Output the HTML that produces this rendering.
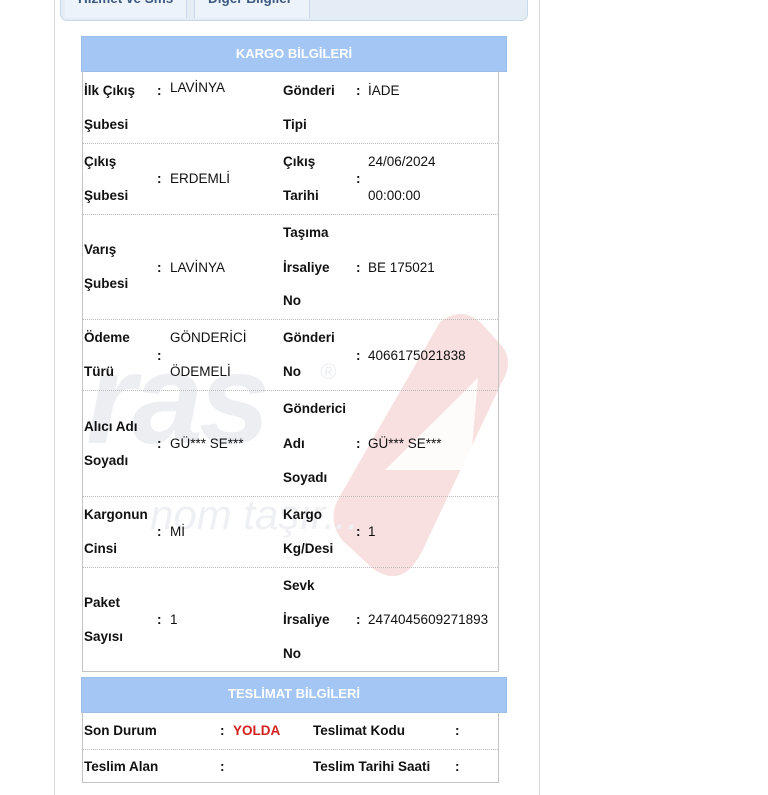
<!DOCTYPE html>
<html><head><meta charset="utf-8"><style>
body{margin:0;width:768px;height:768px;overflow:hidden;background:#fff;font-family:"Liberation Sans",Arial,sans-serif;position:relative}
.a{position:absolute;white-space:nowrap;line-height:20px;font-size:13.5px;color:#111}
.b{font-weight:bold;font-size:13.5px}
.hl{position:absolute;left:82px;width:416px;height:0;border-top:1px dotted #bbb}
</style></head><body>
<div style="position:absolute;left:54px;top:-5px;width:484px;height:800px;border-left:1px solid #d8d8d8;border-right:1px solid #d8d8d8"></div>
<div style="position:absolute;left:60px;top:-10px;width:466px;height:29px;background:#e4edf6;border:1px solid #c9d8e8;border-radius:0 0 7px 7px"></div>
<div style="position:absolute;left:65px;top:-10px;width:121px;height:28px;background:#edf3fa;border-right:1px solid #c9d8e8"></div>
<div style="position:absolute;left:194px;top:-10px;width:114px;height:28px;background:#edf3fa;border-left:1px solid #c9d8e8;border-right:1px solid #c9d8e8"></div>
<div class="a b" style="left:78px;top:-11px;color:#3d5a80">Hizmet ve Sms</div>
<div class="a b" style="left:208px;top:-11px;color:#3d5a80">Diğer Bilgiler</div>

<svg style="position:absolute;left:0;top:0" width="768" height="768">
<path d="M440 322 Q462 305 482 324 L502 346 Q514 362 502 382 L425 545 Q405 592 372 568 L342 540 Q326 518 340 496 Z" fill="#f8e0e0"/>
<path d="M385 470 L478 378 L470 470 Z" fill="#fff" opacity=".85"/>
</svg>
<div class="a" style="left:86px;top:325px;font-size:128px;line-height:150px;font-weight:bold;font-style:italic;color:#eceef2;letter-spacing:-4px">ras</div>
<div class="a" style="left:320px;top:362px;font-size:22px;font-style:italic;color:#eceef2">®</div>
<div class="a" style="left:150px;top:490px;font-size:42px;line-height:50px;font-style:italic;color:#eff0f3">nom taşır...</div>

<div style="position:absolute;left:81px;top:36px;width:424px;height:34px;background:#a3c6f4;border:1px solid #9bbde8"></div>
<div class="a b" style="left:81px;top:44px;width:426px;text-align:center;color:#fff;font-size:13px">KARGO BİLGİLERİ</div>
<div style="position:absolute;left:82px;top:71px;width:415px;height:600px;border:1px solid #c4c4c4;border-top:none"></div>
<div class="hl" style="top:143px"></div><div class="hl" style="top:214px"></div><div class="hl" style="top:319px"></div><div class="hl" style="top:390px"></div><div class="hl" style="top:496px"></div><div class="hl" style="top:567px"></div>

<div class="a b" style="left:84px;top:81px">İlk Çıkış</div><div class="a b" style="left:84px;top:115px">Şubesi</div>
<div class="a b" style="left:157px;top:81px">:</div><div class="a" style="left:170px;top:78px">LAVİNYA</div>
<div class="a b" style="left:283px;top:81px">Gönderi</div><div class="a b" style="left:283px;top:115px">Tipi</div>
<div class="a b" style="left:356px;top:81px">:</div><div class="a" style="left:368px;top:81px">İADE</div>

<div class="a b" style="left:84px;top:152px">Çıkış</div><div class="a b" style="left:84px;top:186px">Şubesi</div>
<div class="a b" style="left:157px;top:169px">:</div><div class="a" style="left:170px;top:169px">ERDEMLİ</div>
<div class="a b" style="left:283px;top:152px">Çıkış</div><div class="a b" style="left:283px;top:186px">Tarihi</div>
<div class="a b" style="left:356px;top:169px">:</div><div class="a" style="left:368px;top:152px">24/06/2024</div><div class="a" style="left:368px;top:186px">00:00:00</div>

<div class="a b" style="left:84px;top:240px">Varış</div><div class="a b" style="left:84px;top:274px">Şubesi</div>
<div class="a b" style="left:157px;top:258px">:</div><div class="a" style="left:170px;top:258px">LAVİNYA</div>
<div class="a b" style="left:283px;top:223px">Taşıma</div><div class="a b" style="left:283px;top:258px">İrsaliye</div><div class="a b" style="left:283px;top:291px">No</div>
<div class="a b" style="left:356px;top:258px">:</div><div class="a" style="left:368px;top:258px">BE 175021</div>

<div class="a b" style="left:84px;top:328px">Ödeme</div><div class="a b" style="left:84px;top:362px">Türü</div>
<div class="a b" style="left:157px;top:346px">:</div><div class="a" style="left:170px;top:328px">GÖNDERİCİ</div><div class="a" style="left:170px;top:362px">ÖDEMELİ</div>
<div class="a b" style="left:283px;top:328px">Gönderi</div><div class="a b" style="left:283px;top:362px">No</div>
<div class="a b" style="left:356px;top:346px">:</div><div class="a" style="left:368px;top:346px">4066175021838</div>

<div class="a b" style="left:84px;top:417px">Alıcı Adı</div><div class="a b" style="left:84px;top:451px">Soyadı</div>
<div class="a b" style="left:157px;top:434px">:</div><div class="a" style="left:170px;top:434px">GÜ*** SE***</div>
<div class="a b" style="left:283px;top:399px">Gönderici</div><div class="a b" style="left:283px;top:434px">Adı</div><div class="a b" style="left:283px;top:468px">Soyadı</div>
<div class="a b" style="left:356px;top:434px">:</div><div class="a" style="left:368px;top:434px">GÜ*** SE***</div>

<div class="a b" style="left:84px;top:505px">Kargonun</div><div class="a b" style="left:84px;top:539px">Cinsi</div>
<div class="a b" style="left:157px;top:522px">:</div><div class="a" style="left:170px;top:522px">Mİ</div>
<div class="a b" style="left:283px;top:505px">Kargo</div><div class="a b" style="left:283px;top:539px">Kg/Desi</div>
<div class="a b" style="left:356px;top:522px">:</div><div class="a" style="left:368px;top:522px">1</div>

<div class="a b" style="left:84px;top:593px">Paket</div><div class="a b" style="left:84px;top:627px">Sayısı</div>
<div class="a b" style="left:157px;top:610px">:</div><div class="a" style="left:170px;top:610px">1</div>
<div class="a b" style="left:283px;top:576px">Sevk</div><div class="a b" style="left:283px;top:610px">İrsaliye</div><div class="a b" style="left:283px;top:644px">No</div>
<div class="a b" style="left:356px;top:610px">:</div><div class="a" style="left:368px;top:610px">2474045609271893</div>

<div style="position:absolute;left:81px;top:677px;width:424px;height:34px;background:#a3c6f4;border:1px solid #9bbde8"></div>
<div class="a b" style="left:81px;top:684px;width:426px;text-align:center;color:#fff;font-size:13px">TESLİMAT BİLGİLERİ</div>
<div style="position:absolute;left:82px;top:712px;width:415px;height:70px;border:1px solid #c4c4c4;border-top:none"></div>
<div class="hl" style="top:749px"></div>
<div class="a b" style="left:84px;top:721px">Son Durum</div>
<div class="a b" style="left:220px;top:721px">:</div><div class="a b" style="left:233px;top:721px;color:#d42020">YOLDA</div>
<div class="a b" style="left:313px;top:721px">Teslimat Kodu</div><div class="a b" style="left:455px;top:721px">:</div>
<div class="a b" style="left:84px;top:757px">Teslim Alan</div>
<div class="a b" style="left:220px;top:757px">:</div>
<div class="a b" style="left:313px;top:757px">Teslim Tarihi Saati</div><div class="a b" style="left:455px;top:757px">:</div>
</body></html>
